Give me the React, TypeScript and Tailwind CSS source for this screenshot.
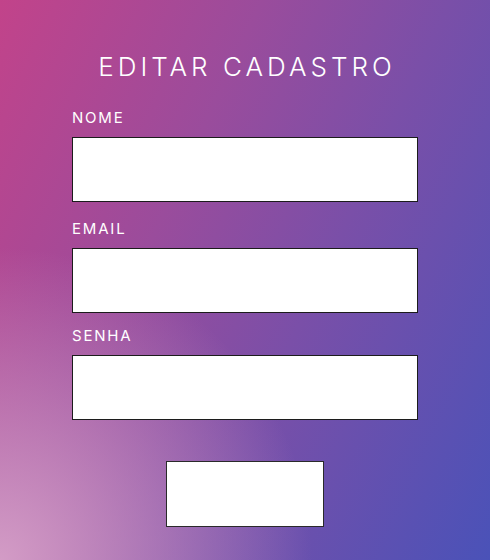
export default function App() {
  return (
    <main className="w-[490px] h-[560px] overflow-hidden bg-[radial-gradient(circle_at_0%_100%,rgba(214,160,200,0.95)_0%,rgba(214,160,200,0)_42%),linear-gradient(115deg,#c2438a_0%,#9a4c9c_35%,#7a4fa8_60%,#4a52b8_100%)] font-['Inter',sans-serif] text-white">
      <form className="w-[346px] mx-auto flex flex-col">
        <h1 className="mt-[52px] text-center text-[26px] leading-[30px] font-light tracking-[0.155em] pl-[0.155em]">
          EDITAR CADASTRO
        </h1>

        <label className="mt-[27px] text-[15px] leading-[18px] tracking-[0.12em]">NOME</label>
        <input type="text" className="mt-[10px] h-[65px] bg-white border border-[#1c1c1c]" />

        <label className="mt-[18px] text-[15px] leading-[18px] tracking-[0.12em]">EMAIL</label>
        <input type="email" className="mt-[10px] h-[65px] bg-white border border-[#1c1c1c]" />

        <label className="mt-[14px] text-[15px] leading-[18px] tracking-[0.12em]">SENHA</label>
        <input type="password" className="mt-[10px] h-[65px] bg-white border border-[#1c1c1c]" />

        <button type="submit" className="mt-[41px] mx-auto w-[158px] h-[66px] bg-white border border-[#2a2a2a]" />
      </form>
    </main>
  );
}
